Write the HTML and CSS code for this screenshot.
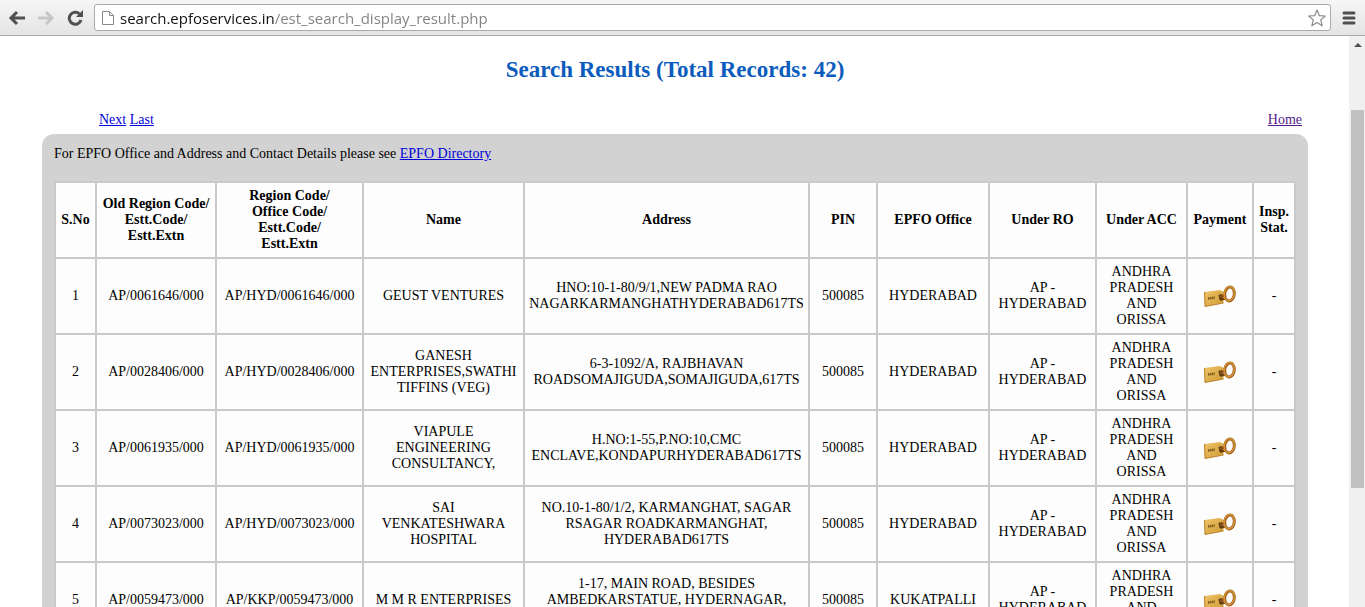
FILE: index.html
```html
<!DOCTYPE html>
<html lang="en">
<head>
<meta charset="UTF-8">
<title>Search Results</title>
<link rel="stylesheet" href="styles.css">
</head>
<body>
<svg class="defs" width="0" height="0">
    <defs>
        <linearGradient id="brass" x1="0" y1="0" x2="1" y2="1">
            <stop offset="0" stop-color="#f0c468"/>
            <stop offset="1" stop-color="#cf9a35"/>
        </linearGradient>
    </defs>
    <symbol id="key" viewBox="0 0 34 24">
        <path d="M1.5 8L17 6L20.5 8V19L2 22.5Z" fill="url(#brass)"/>
        <path d="M1.5 8L2 22.5L20.5 19" fill="none" stroke="#b98329" stroke-width="1"/>
        <path d="M5 14.5L12 13.5" stroke="#7c591c" stroke-width="2.5" stroke-dasharray="1.5 .6"/>
        <path d="M15.5 11L19 10L20 13L18.5 17L16.5 16Z" fill="#5a3712"/>
        <path d="M17 13L23 11" stroke="#8f5518" stroke-width="2.5"/>
        <path d="M19 15.5L22 14.5" stroke="#6b4215" stroke-width="2"/>
        <ellipse cx="26.5" cy="10" rx="4.8" ry="7" fill="none" stroke="#a8641d" stroke-width="3" transform="rotate(8 26.5 10)"/>
        <ellipse cx="26.2" cy="9.7" rx="5" ry="7.2" fill="none" stroke="#d99a40" stroke-width="1.2" transform="rotate(8 26.5 10)"/>
    </symbol>
</svg>

<div class="toolbar">
    <button class="tool back" aria-label="Back">
        <svg width="18" height="16" viewBox="0 0 18 16"><path d="M17 8H4M9 2L3 8L9 14" fill="none" stroke="#505050" stroke-width="3"/></svg>
    </button>
    <button class="tool forward" aria-label="Forward">
        <svg width="18" height="16" viewBox="0 0 18 16"><path d="M1 8H14M9 2L15 8L9 14" fill="none" stroke="#c6c6c6" stroke-width="3"/></svg>
    </button>
    <button class="tool reload" aria-label="Reload">
        <svg width="18" height="16" viewBox="0 0 18 16"><path d="M13.500 4A6 6 0 1 0 15 10" fill="none" stroke="#505050" stroke-width="3"/><path d="M17 0V7H10Z" fill="#505050"/></svg>
    </button>
    <div class="omnibox">
        <svg width="12" height="16" viewBox="0 0 12 16"><path d="M.5 1.5H7.5L11.5 5.500V14.5H.5ZM7.5 1.5V5.5H11.5" fill="#fff" stroke="#8a8a8a"/></svg>
        <input class="url" type="text" aria-label="Address" value="search.epfoservices.in/est_search_display_result.php">
        <button class="tool star" aria-label="Bookmark">
            <svg width="20" height="20" viewBox="0 0 20 20"><path d="M10 2L12.3 7.6L18.3 8L13.7 11.9L15.2 17.8L10 14.6L4.8 17.8L6.3 11.9L1.7 8L7.7 7.6Z" fill="#fff" stroke="#8a8a8a" stroke-width="1.2" stroke-linejoin="round"/></svg>
        </button>
    </div>
    <button class="tool menu" aria-label="Menu">
        <svg width="16" height="14" viewBox="0 0 16 14"><path d="M3 2H13M3 7H13M3 12H13" stroke="#505050" stroke-width="3" stroke-linecap="round"/></svg>
    </button>
</div>

<div class="view">
    <div class="page">
        <h1>Search Results (Total Records: 42)</h1>
        <div class="pager">
            <div><a href="#">Next</a> <a href="#">Last</a></div>
            <a class="visited" href="#">Home</a>
        </div>
        <div class="panel">
            <p>For EPFO Office and Address and Contact Details please see <a href="#">EPFO Directory</a></p>
            <table class="results">
                <colgroup>
                    <col class="c-sno">
                    <col class="c-old">
                    <col class="c-region">
                    <col class="c-name">
                    <col class="c-address">
                    <col class="c-pin">
                    <col class="c-office">
                    <col class="c-ro">
                    <col class="c-acc">
                    <col class="c-pay">
                    <col class="c-insp">
                </colgroup>
                <thead>
                    <tr>
                        <th>S.No</th>
                        <th>Old Region Code/<br>Estt.Code/<br>Estt.Extn</th>
                        <th>Region Code/<br>Office Code/<br>Estt.Code/<br>Estt.Extn</th>
                        <th>Name</th>
                        <th>Address</th>
                        <th>PIN</th>
                        <th>EPFO Office</th>
                        <th>Under RO</th>
                        <th>Under ACC</th>
                        <th>Payment</th>
                        <th>Insp.<br>Stat.</th>
                    </tr>
                </thead>
                <tbody>
                    <tr>
                        <td>1</td>
                        <td>AP/0061646/000</td>
                        <td>AP/HYD/0061646/000</td>
                        <td>GEUST VENTURES</td>
                        <td>HNO:10-1-80/9/1,NEW PADMA RAO NAGARKARMANGHATHYDERABAD617TS</td>
                        <td>500085</td>
                        <td>HYDERABAD</td>
                        <td>AP - HYDERABAD</td>
                        <td>ANDHRA PRADESH AND<br>ORISSA</td>
                        <td><a href="#" aria-label="Payment"><svg class="key"><use href="#key"/></svg></a></td>
                        <td>-</td>
                    </tr>
                    <tr>
                        <td>2</td>
                        <td>AP/0028406/000</td>
                        <td>AP/HYD/0028406/000</td>
                        <td>GANESH ENTERPRISES,SWATHI TIFFINS (VEG)</td>
                        <td>6-3-1092/A, RAJBHAVAN ROADSOMAJIGUDA,SOMAJIGUDA,617TS</td>
                        <td>500085</td>
                        <td>HYDERABAD</td>
                        <td>AP - HYDERABAD</td>
                        <td>ANDHRA PRADESH AND<br>ORISSA</td>
                        <td><a href="#" aria-label="Payment"><svg class="key"><use href="#key"/></svg></a></td>
                        <td>-</td>
                    </tr>
                    <tr>
                        <td>3</td>
                        <td>AP/0061935/000</td>
                        <td>AP/HYD/0061935/000</td>
                        <td>VIAPULE ENGINEERING CONSULTANCY,</td>
                        <td>H.NO:1-55,P.NO:10,CMC ENCLAVE,KONDAPURHYDERABAD617TS</td>
                        <td>500085</td>
                        <td>HYDERABAD</td>
                        <td>AP - HYDERABAD</td>
                        <td>ANDHRA PRADESH AND<br>ORISSA</td>
                        <td><a href="#" aria-label="Payment"><svg class="key"><use href="#key"/></svg></a></td>
                        <td>-</td>
                    </tr>
                    <tr>
                        <td>4</td>
                        <td>AP/0073023/000</td>
                        <td>AP/HYD/0073023/000</td>
                        <td>SAI<br>VENKATESHWARA HOSPITAL</td>
                        <td>NO.10-1-80/1/2, KARMANGHAT, SAGAR RSAGAR ROADKARMANGHAT, HYDERABAD617TS</td>
                        <td>500085</td>
                        <td>HYDERABAD</td>
                        <td>AP - HYDERABAD</td>
                        <td>ANDHRA PRADESH AND<br>ORISSA</td>
                        <td><a href="#" aria-label="Payment"><svg class="key"><use href="#key"/></svg></a></td>
                        <td>-</td>
                    </tr>
                    <tr>
                        <td>5</td>
                        <td>AP/0059473/000</td>
                        <td>AP/KKP/0059473/000</td>
                        <td>M M R ENTERPRISES</td>
                        <td>1-17, MAIN ROAD, BESIDES<br>AMBEDKARSTATUE, HYDERNAGAR,<br>HYDERABAD617TS</td>
                        <td>500085</td>
                        <td>KUKATPALLI</td>
                        <td>AP - HYDERABAD</td>
                        <td>ANDHRA PRADESH AND<br>ORISSA</td>
                        <td><a href="#" aria-label="Payment"><svg class="key"><use href="#key"/></svg></a></td>
                        <td>-</td>
                    </tr>
                </tbody>
            </table>
        </div>
    </div>
    <div class="scrollbar">
        <div class="arrow"></div>
        <div class="thumb"></div>
    </div>
</div>
</body>
</html>
```
FILE: styles.css
```css
*{
    margin:0;
    padding:0;
    box-sizing: border-box;
}
body{
    height: 100vh;
    display: flex;
    flex-direction: column;
    overflow: hidden;
    background: #fff;
    color: #000;
    font-family: "Liberation Serif", "Times New Roman", serif;
    font-size: 14px;
    line-height: 16px;
}
.defs{
    position:absolute;
}
/* browser bar */
.toolbar{
    flex: none;
    display: flex;
    align-items: center;
    height: 36px;
    padding: 0 8px;
    background: linear-gradient(#f6f6f6,#e4e4e4);
    border-bottom: 1px solid #a9a9a9;
}
.tool{
    display: flex;
    flex: none;
    background: none;
    border: none;
    margin-right: 11px;
}
.reload{
    margin-right: 10px;
}
.omnibox{
    flex: 1;
    display: flex;
    align-items: center;
    height: 27px;
    padding: 0 3px 0 7px;
    background: #fff;
    border: 1px solid #aaa;
    border-radius: 3px;
    margin-right: 10px;
}
.url{
    flex: 1;
    min-width: 0;
    height: 24px;
    margin-left: 6px;
    border: none;
    outline: none;
    font-family: "Open Sans", "Noto Sans", sans-serif;
    font-size: 15px;
    /* host part black, path grey */
    color: transparent;
    background: linear-gradient(to right,#111 154px,#808080 154px);
    -webkit-background-clip: text;
    background-clip: text;
}
.star,
.menu{
    margin-right: 0;
}
/* page */
.view{
    flex: 1;
    min-height: 0;
    display: flex;
}
.page{
    flex: 1;
    padding: 20px 41px 0 42px;
    overflow: hidden;
}
h1{
    color: #0b5cbd;
    font-size: 23px;
    line-height: 28px;
    text-align: center;
}
a{
    color: #0000d8;
}
a.visited{
    color: #551a8b;
}
.pager{
    display: flex;
    justify-content: space-between;
    padding: 28px 6px 6px 57px;
}
.panel{
    padding: 12px;
    background: #d2d2d2;
    border-radius: 12px;
}
.panel p{
    margin-bottom: 19px;
}
.results{
    width: 100%;
    table-layout: fixed;
    border-collapse: collapse;
    background: #fdfdfd;
    text-align: center;
}
.results th,
.results td{
    border: 2px solid #cacaca;
    padding: 5px 4px;
    vertical-align: middle;
}
.c-sno{ width: 41px; }
.c-old{ width: 120px; }
.c-region{ width: 147px; }
.c-name{ width: 161px; }
.c-pin{ width: 68px; }
.c-office{ width: 112px; }
.c-ro{ width: 107px; }
.c-acc{ width: 91px; }
.c-pay{ width: 66px; }
.c-insp{ width: 42px; }
.key{
    width: 34px;
    height: 24px;
    display: block;
    margin: 0 auto;
}
/* scrollbar */
.scrollbar{
    flex: none;
    width: 16px;
    padding: 7px 1px 0 2px;
    background: #f0f0f0;
}
.arrow{
    width: 0;
    margin: 0 auto;
    border: 4px solid transparent;
    border-top: none;
    border-bottom: 4px solid #505050;
}
.thumb{
    height: 67%;
    margin-top: 63px;
    background: #c1c1c1;
}
```
